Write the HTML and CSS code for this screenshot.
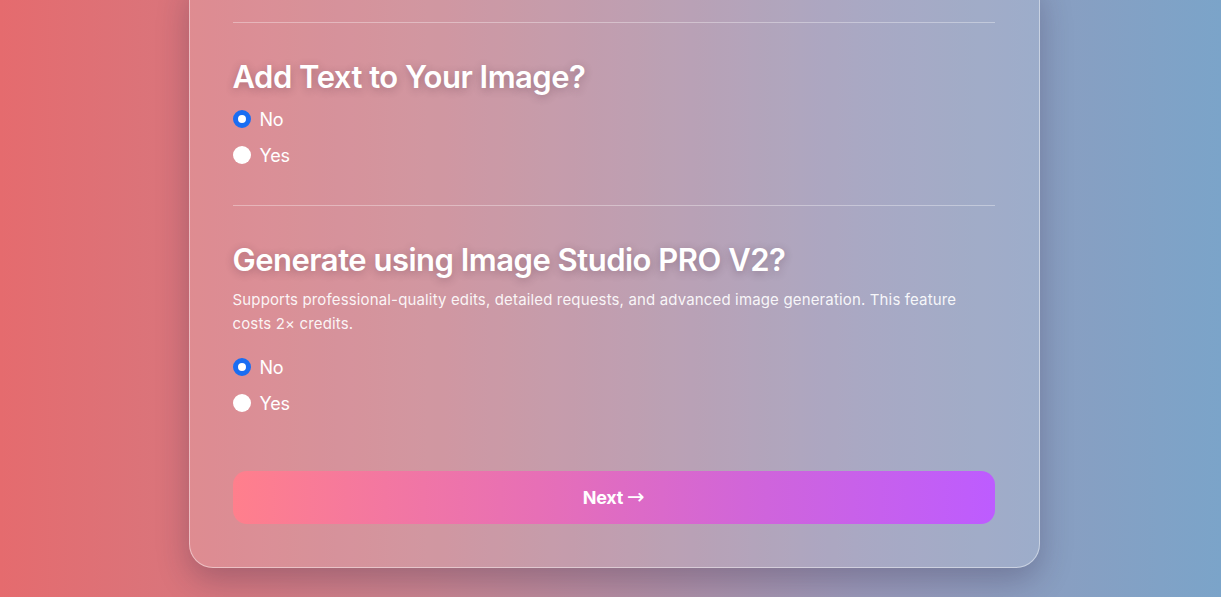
FILE: index.html
```html
<!DOCTYPE html>
<html lang="en">
<head>
<meta charset="utf-8">
<title>Image options</title>
<link rel="stylesheet" href="styles.css">
</head>
<body>
<div class="page">
  <div class="card">
    <section class="section">
      <h2 class="title">Add Text to Your Image?</h2>
      <div class="options">
        <label class="option"><span class="radio checked"></span><span class="label">No</span></label>
        <label class="option"><span class="radio"></span><span class="label">Yes</span></label>
      </div>
    </section>
    <section class="section last">
      <h2 class="title">Generate using Image Studio PRO V2?</h2>
      <p class="desc">Supports professional-quality edits, detailed requests, and advanced image generation. This feature costs 2× credits.</p>
      <div class="options">
        <label class="option"><span class="radio checked"></span><span class="label">No</span></label>
        <label class="option"><span class="radio"></span><span class="label">Yes</span></label>
      </div>
    </section>
    <button class="next">Next <span class="arrow">→</span></button>
  </div>
</div>
</body>
</html>
```
FILE: styles.css
```css
* { box-sizing: border-box; }
html, body { margin: 0; height: 100%; }
body {
  font-family: "Inter", "Noto Sans", sans-serif;
  background: linear-gradient(90deg, #e56b6e 0%, #c9838f 35%, #9a98b8 70%, #7ba4c9 100%);
  color: #fff;
  overflow: hidden;
}
.page {
  height: 597px;
  display: flex;
  flex-direction: column;
  justify-content: flex-end;
  align-items: center;
  padding-bottom: 29px;
}
.card {
  flex-shrink: 0;
  width: 851px;
  margin-left: 7px;
  padding: 44px 44px 43px 43px;
  border-radius: 24px;
  background: rgba(255, 255, 255, 0.16);
  border: 1px solid rgba(255, 255, 255, 0.45);
  box-shadow: 0 12px 32px rgba(40, 30, 60, 0.28);
}
.section {
  border-top: 1px solid rgba(255, 255, 255, 0.35);
  padding-top: 34px;
  padding-bottom: 36px;
}
.section.last { padding-bottom: 54px; }
.title {
  margin: 0 0 8px;
  font-size: 31px;
  line-height: 40px;
  font-weight: 600;
  letter-spacing: -0.5px;
  text-shadow: 0 2px 8px rgba(60, 30, 50, 0.3);
}
.desc {
  margin: 0 0 17px;
  font-size: 15px;
  line-height: 24px;
  color: rgba(255, 255, 255, 0.92);
  letter-spacing: 0.15px;
}
.options {
  display: flex;
  flex-direction: column;
  gap: 8px;
}
.option {
  display: flex;
  align-items: center;
  height: 28px;
  gap: 9px;
}
.radio {
  width: 18px;
  height: 18px;
  border-radius: 50%;
  background: #fff;
  flex-shrink: 0;
}
.radio.checked {
  background: #fff;
  border: 5px solid #1a6df2;
}
.label {
  font-size: 18px;
  letter-spacing: -0.2px;
}
.next {
  display: block;
  width: 100%;
  height: 53px;
  border: none;
  border-radius: 14px;
  background: linear-gradient(90deg, #ff7f8c 0%, #e76fb6 40%, #cf64dc 70%, #bd5cff 100%);
  color: #fff;
  font-family: inherit;
  font-size: 18px;
  font-weight: 700;
  letter-spacing: -0.3px;
}
.arrow {
  font-family: "DejaVu Sans", sans-serif;
  font-weight: 400;
  font-size: 21px;
  line-height: 1;
}
```
